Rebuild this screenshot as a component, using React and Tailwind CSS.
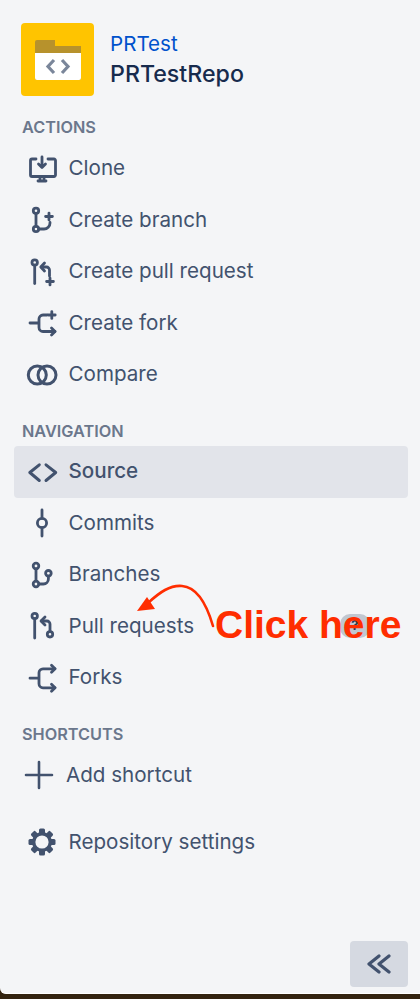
const C = "#42526e";
const Icon = ({ children, className = "" }) => (
  <svg viewBox="0 0 32 32" fill="none" stroke={C} strokeWidth="2.8" strokeLinecap="round" strokeLinejoin="round" className={"w-8 h-8 shrink-0 " + className}>
    {children}
  </svg>
);
const Plus = ({ x, y, r = 3.4 }) => <path d={`M${x - r} ${y}H${x + r}M${x} ${y - r}V${y + r}`} />;

const icons = {
  clone: (<>
    <path d="M10 6H6a1.5 1.5 0 0 0-1.5 1.5V22A1.5 1.5 0 0 0 6 23.5H28a1.5 1.5 0 0 0 1.5-1.5V7.5A1.5 1.5 0 0 0 28 6H22" />
    <path d="M16 4V14M12.5 11L16 14.5L19.5 11" />
    <path d="M14 24V27M18 24V27M12 28H20" />
  </>),
  createBranch: (<>
    <circle cx="10" cy="6.8" r="2.7" />
    <circle cx="10" cy="25" r="2.7" />
    <path d="M10 9.5V22.3M12.7 25H18a6 6 0 0 0 6-6V18.5" />
    <Plus x={23} y={12.5} />
  </>),
  createPr: (<>
    <circle cx="8.7" cy="6.5" r="2.7" />
    <path d="M8.7 9.2V27.5" />
    <path d="M15.5 11H20.5a3 3 0 0 1 3 3V20" />
    <path d="M18.5 7L14.8 11L18.5 15" />
    <Plus x={24} y={25.5} />
  </>),
  createFork: (<>
    <path d="M4 16H13M21 8H17a4 4 0 0 0-4 4V20.5a4 4 0 0 0 4 4H29" />
    <path d="M25.5 21L29 24.5L25.5 28" />
    <Plus x={25.8} y={8} />
  </>),
  compare: (<>
    <circle cx="11.3" cy="16" r="9" strokeWidth="3" />
    <circle cx="21" cy="16" r="9" strokeWidth="3" />
  </>),
  source: (<path d="M13.3 8.8L3.8 16.5L13.3 24.5M20 8.8L29.7 16.5L20 24.5" strokeWidth="3" />),
  commits: (<>
    <circle cx="16" cy="16" r="4.6" />
    <path d="M16 3V11.4M16 20.6V29" />
  </>),
  branches: (<>
    <circle cx="10" cy="7" r="2.8" />
    <circle cx="10" cy="25" r="2.8" />
    <circle cx="22.4" cy="14.3" r="2.8" />
    <path d="M10 9.8V22.2M12.8 25H17.4a5 5 0 0 0 5-5V17.1" />
  </>),
  pr: (<>
    <circle cx="8.7" cy="6" r="2.7" />
    <path d="M8.7 8.7V28" />
    <circle cx="24" cy="24.3" r="2.7" />
    <path d="M24 21.6V14a3 3 0 0 0-3-3H15.5" />
    <path d="M19 7L15 11L19 15" />
  </>),
  forks: (<>
    <path d="M4 16.2H13M29 6.8H17a4 4 0 0 0-4 4V21.8a4 4 0 0 0 4 4H29" />
    <path d="M25.5 3.3L29 6.8L25.5 10.3M25.5 22.3L29 25.8L25.5 29.3" />
  </>),
};

const Row = ({ icon, label, active }) => (
  <div className={"h-[51.5px] flex items-center pl-3 rounded " + (active ? "bg-[#e2e4ea] font-medium" : "")}>
    <Icon>{icons[icon]}</Icon>
    <span className="ml-[10.5px] whitespace-nowrap">{label}</span>
  </div>
);

const Label = ({ children, className = "" }) => (
  <div className={"pl-2 text-[16.3px] leading-5 font-semibold text-[#6b778c] " + className}>{children}</div>
);

export default function App() {
  return (
    <div className="relative h-[999px] bg-[#33230f] overflow-hidden" style={{ fontFamily: "Inter, 'Liberation Sans', sans-serif" }}>
      <div className="h-[994px] bg-[#f4f5f7] border-b border-white rounded-bl-[6px] flex flex-col pl-[14px] pr-[12px] text-[20.6px] text-[#42526e]">
        <div className="flex items-center pt-[23px] pl-[7px]">
          <div className="w-[73px] h-[73px] rounded bg-[#ffc400] flex items-center justify-center shrink-0">
            <svg viewBox="0 0 46 40" className="w-[46px] h-[40px]">
              <path d="M0 2a2 2 0 0 1 2-2H20V6H46V14H0Z" fill="#b7922c" />
              <path d="M0 7H44a2 2 0 0 1 2 2V38a2 2 0 0 1-2 2H2a2 2 0 0 1-2-2Z" fill="#b7922c" />
              <path d="M0 13H46V38a2 2 0 0 1-2 2H2a2 2 0 0 1-2-2Z" fill="#fff" />
              <path d="M19 20L13 26.5L19 33M27 20L33 26.5L27 33" fill="none" stroke="#7a869a" strokeWidth="3.2" />
            </svg>
          </div>
          <div className="ml-4 flex flex-col">
            <span className="text-[#0052cc] text-[20.6px] leading-7">PRTest</span>
            <span className="text-[#172b4d] text-[23.2px] leading-8 font-medium">PRTestRepo</span>
          </div>
        </div>

        <Label className="mt-[21px]">ACTIONS</Label>
        <div className="mt-[6px]">
          <Row icon="clone" label="Clone" />
          <Row icon="createBranch" label="Create branch" />
          <Row icon="createPr" label="Create pull request" />
          <Row icon="createFork" label="Create fork" />
          <Row icon="compare" label="Compare" />
        </div>

        <Label className="mt-[20px]">NAVIGATION</Label>
        <div className="mt-[5.5px]">
          <Row icon="source" label="Source" active />
          <Row icon="commits" label="Commits" />
          <Row icon="branches" label="Branches" />
          <Row icon="pr" label="Pull requests" />
          <Row icon="forks" label="Forks" />
        </div>

        <Label className="mt-[20px]">SHORTCUTS</Label>
        <div className="flex items-center h-[41px] pl-[10px] mt-[11px]">
          <svg viewBox="0 0 30 30" fill="none" stroke={C} strokeWidth="2.6" strokeLinecap="round" className="w-[30px] h-[30px] shrink-0">
            <path d="M2 15H28M15 2V28" />
          </svg>
          <span className="ml-[12px]">Add shortcut</span>
        </div>
        <div className="flex items-center h-[51.5px] pl-3 mt-[21px]">
          <Icon>
            <g stroke="none" fill={C}>
              {[0, 45, 90, 135].map((a) => (
                <rect key={a} x="13" y="2.5" width="6" height="27" rx="1.5" transform={`rotate(${a} 16 16)`} />
              ))}
            </g>
            <circle cx="16" cy="16" r="10" fill={C} stroke="none" />
            <circle cx="16" cy="16" r="6.6" fill="#f4f5f7" stroke="none" />
          </Icon>
          <span className="ml-[10.5px]">Repository settings</span>
        </div>

        <div className="flex-1 flex justify-end items-end pb-[6px]">
          <div className="w-[58px] h-[46px] rounded bg-[#d5d9e1] flex items-center justify-center">
            <svg viewBox="0 0 24 20" fill="none" stroke={C} strokeWidth="3.2" strokeLinecap="round" strokeLinejoin="round" className="w-6 h-5">
              <path d="M12 2L2 10L12 18M22 2L12 10L22 18" />
            </svg>
          </div>
        </div>
      </div>

      {/* annotation overlay */}
      <div className="absolute left-[340px] top-[614px] w-[30px] h-[24px] rounded-[10px] bg-[#c1c7d0] flex items-center justify-center text-[13px] font-bold text-[#253858]">?</div>
      <svg className="absolute left-[130px] top-[580px] w-[90px] h-[50px] overflow-visible" viewBox="0 0 90 50" fill="none">
        <path d="M83 46C76 22 66 7 52 6C40 5 30 12 18 23" stroke="#ff2d00" strokeWidth="2.6" strokeLinecap="round" />
        <path d="M7 31L17 17L25 29Z" fill="#ff2d00" />
      </svg>
      <div className="absolute left-[215px] top-[602px] text-[39px] leading-[46px] font-bold text-[#ff2d00] whitespace-nowrap" style={{ fontFamily: "'Liberation Sans', Arial, sans-serif" }}>Click here</div>
    </div>
  );
}
